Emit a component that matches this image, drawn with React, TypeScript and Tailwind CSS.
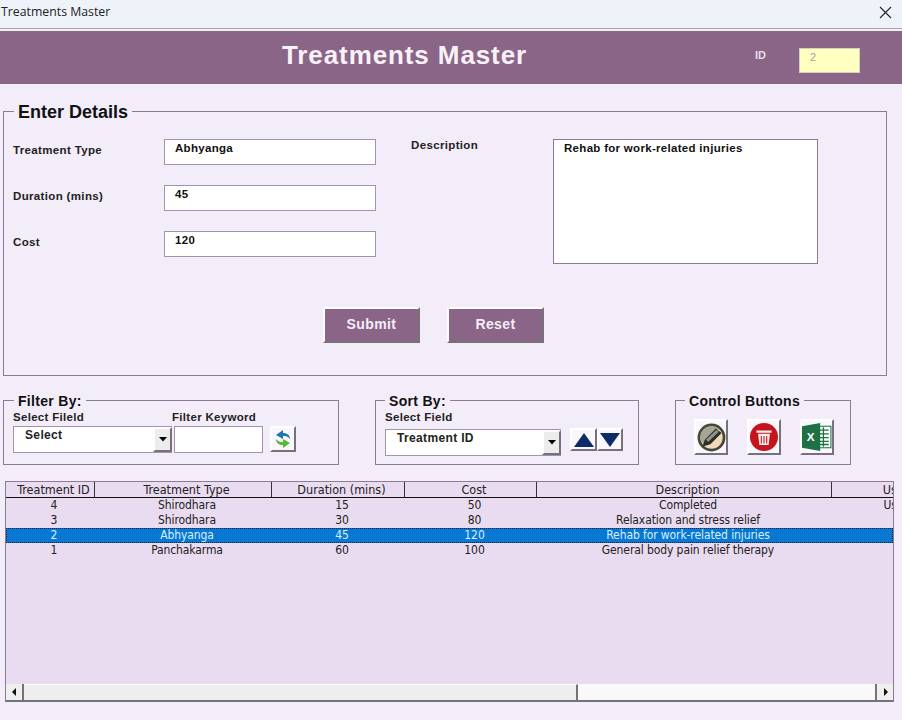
import React from "react";

const ui = "font-['Liberation_Sans',Arial,sans-serif]";
const grid = "font-['DejaVu_Sans_Condensed','DejaVu_Sans',sans-serif]";
const raised = "border-t-2 border-l-2 border-t-white border-l-white border-r-2 border-b-2 border-r-[#77727a] border-b-[#77727a]";

const cols = [
  { name: "Treatment ID", w: 89 },
  { name: "Treatment Type", w: 177 },
  { name: "Duration (mins)", w: 133 },
  { name: "Cost", w: 132 },
  { name: "Description", w: 295 },
  { name: "User", w: 120 },
];

const rows = [
  { c: ["4", "Shirodhara", "15", "50", "Completed", "User"], sel: false },
  { c: ["3", "Shirodhara", "30", "80", "Relaxation and stress relief", ""], sel: false },
  { c: ["2", "Abhyanga", "45", "120", "Rehab for work-related injuries", ""], sel: true },
  { c: ["1", "Panchakarma", "60", "100", "General body pain relief therapy", ""], sel: false },
];

function Field({ label, value }: { label: string; value: string }) {
  return (
    <div className="flex items-start h-[26px]">
      <div className="w-[151px] pt-[4px] text-[11.5px] font-bold tracking-[0.35px] leading-[15px] text-[#222]">{label}</div>
      <div className="w-[212px] h-[26px] bg-white border border-[#a493ad] pl-[10px] pt-[1px] text-[11.5px] font-bold tracking-[0.3px] leading-[15px] text-[#111]">
        {value}
      </div>
    </div>
  );
}

function Select({ w, value }: { w: string; value: string }) {
  return (
    <div className={`${w} h-[27px] bg-white border-l border-t border-b border-[#a493ad] flex justify-between`}>
      <div className="pl-[11px] pt-[1px] text-[12px] font-bold tracking-[0.35px] leading-[15px] text-[#222]">{value}</div>
      <div className={`w-[19px] h-full bg-[#ececec] ${raised} border-t-[#f5f5f5] border-l-[#f5f5f5] flex items-center justify-center`}>
        <svg width="8" height="5" viewBox="0 0 8 5"><path d="M0 0h8L4 4.5z" fill="#000" /></svg>
      </div>
    </div>
  );
}

function IconButton({ children, className }: { children: React.ReactNode; className: string }) {
  return (
    <div className={`${className} bg-[#f9f7fb] ${raised} flex items-center justify-center`}>{children}</div>
  );
}

export default function App() {
  return (
    <div className={`${ui} w-[902px] h-[720px] overflow-hidden bg-[#f3ecf9] flex flex-col`}>
      <div className="h-[28px] bg-[#eef3f9] flex items-center justify-between pl-[1px] pr-[10px] font-['Open_Sans',sans-serif] text-[12.3px] text-[#222]">
        <span className="-mt-[3px]">Treatments Master</span>
        <svg className="-mt-[4px]" width="13" height="13" viewBox="0 0 13 13">
          <path d="M1 1l11 11M12 1L1 12" stroke="#222" strokeWidth="1.1" fill="none" />
        </svg>
      </div>
      <div className="h-[3px] bg-[#f3f3f6] border-t border-[#a9a5b0]" />

      <div className="h-[53px] bg-[#8a6587] flex items-center shrink-0">
        <h1 className="ml-[282px] w-[473px] text-[26px] font-bold tracking-[0.9px] text-[#f8f2f8] -mt-[4px]">Treatments Master</h1>
        <span className="text-[11px] font-bold text-[#e8dcec] -mt-[5px] w-[44px]">ID</span>
        <div className="w-[61px] h-[25px] mt-[5px] bg-[#ffffc0] border border-[#d9cfc0] pl-[10px] text-[11px] leading-[17px] text-[#aaa0a8]">2</div>
      </div>

      <fieldset className="mt-[17px] ml-[3px] w-[884px] h-[275px] border border-[#8f7a95] shrink-0">
        <legend className="ml-[10px] px-[4px] text-[18px] font-bold leading-[22px] h-[20px] text-[#111]">Enter Details</legend>
        <div className="flex pl-[9px] pt-[18px]">
          <div className="flex flex-col gap-[20px]">
            <Field label="Treatment Type" value="Abhyanga" />
            <Field label="Duration (mins)" value="45" />
            <Field label="Cost" value="120" />
          </div>
          <div className="ml-[35px] w-[142px] text-[11.5px] font-bold tracking-[0.35px] leading-[13px] text-[#222]">Description</div>
          <div className="w-[265px] h-[125px] bg-white border border-[#8f7a95] pl-[10px] pt-[1px] text-[11.5px] font-bold tracking-[0.3px] leading-[15px] text-[#111]">
            Rehab for work-related injuries
          </div>
        </div>
        <div className="flex gap-[27px] pl-[319px] mt-[43px]">
          {["Submit", "Reset"].map((t) => (
            <div key={t} className={`w-[97px] h-[36px] bg-[#8a6587] ${raised} flex items-center justify-center pb-[1px] text-[14px] font-bold tracking-[0.4px] text-[#f6eef6]`}>
              {t}
            </div>
          ))}
        </div>
      </fieldset>

      <div className="flex gap-[36px] ml-[3px] mt-[17px] shrink-0">
        <fieldset className="w-[336px] h-[72px] border border-[#8f7a95]">
          <legend className="ml-[10px] px-[4px] text-[14px] font-bold leading-[16px] h-[14px] tracking-[0.3px] text-[#111]">Filter By:</legend>
          <div className="pl-[9px] flex">
            <div className="w-[161px]">
              <div className="h-[19px] text-[11.5px] font-bold leading-[21px] tracking-[0.3px] text-[#222]">Select Fileld</div>
              <Select w="w-[159px]" value="Select" />
            </div>
            <div className="w-[89px]">
              <div className="h-[19px] -ml-[2px] text-[11.5px] font-bold leading-[21px] tracking-[0.3px] whitespace-nowrap text-[#222]">Filter Keyword</div>
              <div className="h-[27px] bg-white border border-[#a493ad]" />
            </div>
            <IconButton className="ml-[7px] mt-[19px] w-[26px] h-[26px]">
              <svg width="18" height="20" viewBox="0 0 18 20">
                <path d="M9 1L2 6l7 4V7c3 0 5 .5 7 3 0-4-3-6-7-6z" fill="#1f78ad" />
                <path d="M9 19l7-5-7-4v3c-3 0-5-.5-7-3 0 4 3 6 7 6z" fill="#58b83a" />
              </svg>
            </IconButton>
          </div>
        </fieldset>

        <fieldset className="w-[264px] h-[72px] border border-[#8f7a95]">
          <legend className="ml-[9px] px-[4px] text-[14px] font-bold leading-[16px] h-[14px] tracking-[0.3px] text-[#111]">Sort By:</legend>
          <div className="pl-[9px]">
            <div className="h-[19px] text-[11.5px] font-bold leading-[21px] tracking-[0.3px] text-[#222]">Select Field</div>
            <div className="flex mt-[3px]">
              <Select w="w-[176px]" value="Treatment ID" />
              <div className="flex ml-[9px] -mt-[1px]">
                <IconButton className="w-[27px] h-[23px]">
                  <svg width="20" height="14" viewBox="0 0 20 14"><path d="M10 0l10 14H0z" fill="#0d2a6b" /></svg>
                </IconButton>
                <IconButton className="w-[26px] h-[23px]">
                  <svg width="20" height="14" viewBox="0 0 20 14"><path d="M10 14L20 0H0z" fill="#0d2a6b" /></svg>
                </IconButton>
              </div>
            </div>
          </div>
        </fieldset>

        <fieldset className="w-[176px] h-[72px] border border-[#8f7a95]">
          <legend className="ml-[9px] px-[4px] text-[14px] font-bold leading-[16px] h-[14px] tracking-[0.3px] text-[#111]">Control Buttons</legend>
          <div className="flex gap-[19px] pl-[18px] pt-[12px]">
            <IconButton className="w-[34px] h-[36px]">
              <svg className="shrink-0" width="29" height="29" viewBox="0 0 26 26">
                <circle cx="13" cy="13" r="12.5" fill="#44473a" />
                <circle cx="13" cy="13" r="10" fill="#f0d9b8" />
                <path d="M3 13a10 10 0 0 1 16-8L7 20a10 10 0 0 1-4-7z" fill="#a5a794" />
                <path d="M5 21l2-6L17 5l5 4-10 10z" fill="#2a2d26" />
                <path d="M8 15L17.5 6l2 1.8L10 17z" fill="#8f9488" />
              </svg>
            </IconButton>
            <IconButton className="w-[34px] h-[36px]">
              <svg className="shrink-0" width="28" height="28" viewBox="0 0 26 26">
                <circle cx="13" cy="13" r="13" fill="#c4141c" />
                <path d="M6 7h14v2H6zM7.500 10h11l-1.200 10.500H8.700z" fill="#fbeeee" />
                <path d="M10.500 12v7M13 12v7M15.500 12v7" stroke="#c4141c" strokeWidth="1" />
              </svg>
            </IconButton>
            <IconButton className="w-[34px] h-[36px]">
              <svg className="shrink-0" width="30" height="28" viewBox="0 0 28 26">
                <path d="M13 3h14v20H13z" fill="#fff" stroke="#1e7145" />
                <path d="M16 6.500h9M16 10h9M16 13.500h9M16 17h9M16 20h9M20 4v18" stroke="#1e7145" strokeWidth="1.200" />
                <path d="M0 3l17-3v26L0 23z" fill="#1e7145" />
                <text x="4.500" y="17" fontSize="11" fontWeight="bold" fill="#fff" fontFamily="Liberation Sans">X</text>
              </svg>
            </IconButton>
          </div>
        </fieldset>
      </div>

      <div className={`${grid} mt-[16px] ml-[5px] w-[889px] h-[221px] shrink-0 bg-[#eadcf0] border-t border-l border-r border-[#8f7a95] overflow-hidden flex flex-col text-[12px] leading-[15px] text-[#222]`}>
        <div className="flex h-[16px] border-b border-[#111] shrink-0 text-[12.5px] leading-[15px]">
          {cols.map((c, i) => (
            <div key={c.name} style={{ width: c.w }} className={`pl-[7px] text-center shrink-0 overflow-hidden whitespace-nowrap ${i < 5 ? "border-r border-[#333]" : ""}`}>
              {c.name}
            </div>
          ))}
        </div>
        <div className="flex-1 tracking-[-0.1px]">
          {rows.map((r) => (
            <div key={r.c[0]} className={`flex h-[15px] ${r.sel ? "bg-[#0a78d2] text-[#d5f0ff] outline-1 outline-dotted -outline-offset-1 outline-[#123]" : ""}`}>
              {r.c.map((v, i) => (
                <div key={i} style={{ width: cols[i].w }} className="pl-[7px] text-center shrink-0 overflow-hidden whitespace-nowrap">
                  {v}
                </div>
              ))}
            </div>
          ))}
        </div>
        <div className="h-[18px] flex shrink-0 border-b-2 border-[#77727a]">
          <div className="w-[18px] bg-[#efefef] border-r-2 border-[#77727a] flex items-center justify-center">
            <svg width="5" height="8" viewBox="0 0 5 8"><path d="M4 0v8L0 4z" fill="#111" /></svg>
          </div>
          <div className="w-[554px] bg-[#eeeeee] border-t border-t-white border-r-2 border-r-[#77727a]" />
          <div className="flex-1 bg-[#f9f9f9]" />
          <div className="w-[18px] bg-[#efefef] border-l-2 border-[#77727a] flex items-center justify-center">
            <svg width="5" height="8" viewBox="0 0 5 8"><path d="M1 0v8l4-4z" fill="#111" /></svg>
          </div>
        </div>
      </div>
    </div>
  );
}
